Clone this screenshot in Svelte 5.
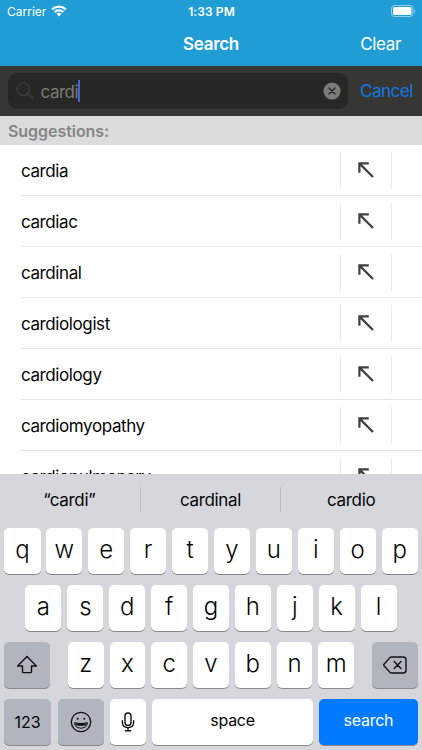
<script lang="ts">
  let query = 'cardi';

  const suggestions: string[] = [
    'cardia',
    'cardiac',
    'cardinal',
    'cardiologist',
    'cardiology',
    'cardiomyopathy',
    'cardiopulmonary'
  ];

  const predictions = ['“cardi”', 'cardinal', 'cardio'];
  const topRow = 'qwertyuiop'.split('');
  const middleRow = 'asdfghjkl'.split('');
  const bottomRow = 'zxcvbnm'.split('');

  const type = (letter: string) => {
    query = query + letter;
  };

  const erase = () => {
    query = query.slice(0, -1);
  };
</script>

<div class="screen">
  <header>
    <div class="status">
      <div class="carrier">
        <span>Carrier</span>
        <svg width="16" height="12" viewBox="0 0 16 12" fill="none" stroke="#fff" stroke-width="2.3">
          <path d="M1.2 4.4a9.8 9.8 0 0 1 13.6 0" />
          <path d="M3.7 7.1a6.2 6.2 0 0 1 8.6 0" />
          <path d="M8 11.4L5.6 8.9a3.5 3.5 0 0 1 4.8 0z" fill="#fff" stroke="none" />
        </svg>
      </div>
      <span class="time">1:33 PM</span>
      <svg class="battery" width="25" height="12" viewBox="0 0 25 12">
        <rect x="0.5" y="0.5" width="21.5" height="11" rx="3" fill="none" stroke="#fff" stroke-opacity="0.5" />
        <rect x="2" y="2" width="18.5" height="8" rx="1.6" fill="#fff" />
        <path d="M23.3 4v4c1.4-.5 1.4-3.5 0-4z" fill="#fff" fill-opacity="0.55" />
      </svg>
    </div>
    <div class="nav">
      <span></span>
      <h1>Search</h1>
      <button class="clear" on:click={() => (query = '')}>Clear</button>
    </div>
  </header>

  <div class="search-bar">
    <div class="field">
      <svg width="18" height="18" viewBox="0 0 18 18" fill="none" stroke="#3a3a38" stroke-width="1.6" stroke-linecap="round">
        <circle cx="7.2" cy="7.2" r="6.2" />
        <path d="M11.8 11.8l4.8 4.4" />
      </svg>
      <span class="query">{query}</span>
      <span class="caret"></span>
      <svg class="reset" width="18" height="18" viewBox="0 0 18 18">
        <circle cx="9" cy="9" r="8.6" fill="#7d7d7b" />
        <path d="M6 6l6 6M12 6l-6 6" stroke="#272723" stroke-width="1.5" stroke-linecap="round" />
      </svg>
    </div>
    <button class="cancel">Cancel</button>
  </div>

  <h2>Suggestions:</h2>

  <ul>
    {#each suggestions as suggestion}
      <li>
        <span class="word">{suggestion}</span>
        <button class="fill" aria-label="Use suggestion" on:click={() => (query = suggestion)}>
          <svg width="16" height="16" viewBox="0 0 16 16" fill="none" stroke="#3f3f3f" stroke-width="2.2">
            <path d="M10.8 1.4H1.4v9.4M1.6 1.6l13.4 13.4" />
          </svg>
        </button>
      </li>
    {/each}
  </ul>

  <div class="keyboard">
    <div class="predictions">
      {#each predictions as prediction}
        <span>{prediction}</span>
      {/each}
    </div>

    <div class="row">
      {#each topRow as letter}
        <button class="key" on:click={() => type(letter)}>{letter}</button>
      {/each}
    </div>

    <div class="row middle">
      {#each middleRow as letter}
        <button class="key" on:click={() => type(letter)}>{letter}</button>
      {/each}
    </div>

    <div class="row bottom">
      <button class="key dark shift" aria-label="Shift">
        <svg width="22" height="20" viewBox="0 0 22 20" fill="none" stroke="#111" stroke-width="1.4" stroke-linejoin="round">
          <path d="M11 1.5L1.6 11h4.9v5.4q0 1.2 1.2 1.2h6.6q1.2 0 1.2-1.2V11h4.9z" />
        </svg>
      </button>
      <div class="letters">
        {#each bottomRow as letter}
          <button class="key" on:click={() => type(letter)}>{letter}</button>
        {/each}
      </div>
      <button class="key dark shift" aria-label="Delete" on:click={erase}>
        <svg width="24" height="18" viewBox="0 0 24 18" fill="none" stroke="#111" stroke-width="1.4" stroke-linejoin="round" stroke-linecap="round">
          <path d="M8.4 1h11.8q2.8 0 2.8 2.8v10.4q0 2.8-2.8 2.8H8.4q-.8 0-1.4-.6L1.2 10q-.9-1 0-2L7 1.6Q7.6 1 8.4 1z" />
          <path d="M11.2 5.5l6.8 7M18 5.5l-6.8 7" />
        </svg>
      </button>
    </div>

    <div class="row">
      <button class="key dark mode">123</button>
      <button class="key dark mode emoji" aria-label="Emoji">
        <svg width="22" height="22" viewBox="0 0 22 22" fill="none" stroke="#111" stroke-width="1.3">
          <circle cx="11" cy="11" r="9.7" />
          <circle cx="7.7" cy="7.8" r="1" fill="#111" stroke="none" />
          <circle cx="14.3" cy="7.8" r="1" fill="#111" stroke="none" />
          <path d="M4.6 11.8q6.4 1.6 12.8 0c-.4 7.2-12.4 7.2-12.8 0z" stroke-linejoin="round" stroke-width="1.1" />
          <path d="M5.2 12.2q5.8 1.4 11.6 0l-1 2.1q-4.8 1-9.6 0z" fill="#111" stroke="none" />
        </svg>
      </button>
      <button class="key mic" aria-label="Dictate">
        <svg width="14" height="20" viewBox="0 0 14 20" fill="none" stroke="#111" stroke-width="1.4" stroke-linecap="round">
          <rect x="4" y="1" width="6" height="12.4" rx="3" />
          <path d="M1.4 8.8v1.8q0 5 5.6 5t5.6-5V8.8M7 15.8v2.8M4.4 18.8h5.2" />
        </svg>
      </button>
      <button class="key space">space</button>
      <button class="key go">search</button>
    </div>
  </div>
</div>

<style>
  :global(body) {
    overflow: hidden;
  }

  .screen {
    width: 422px;
    height: 750px;
    display: flex;
    flex-direction: column;
    background: #fff;
    color: #050505;
    overflow: hidden;
    font-family: Inter, Roboto, sans-serif;
    font-size: 17px;
  }

  button {
    border: none;
    background: none;
    padding: 0;
    font: inherit;
    color: inherit;
  }

  svg {
    display: block;
    flex-shrink: 0;
  }

  header {
    height: 66px;
    flex-shrink: 0;
    background: #219dd5;
    color: #fff;
  }

  .status {
    display: grid;
    grid-template-columns: 1fr auto 1fr;
    align-items: center;
    height: 22px;
    padding: 0 6px 0 7px;
    font-size: 12px;
  }

  .carrier {
    display: flex;
    align-items: center;
    gap: 5px;
    letter-spacing: 0;
  }

  .time {
    font-weight: 600;
    letter-spacing: 0.1px;
  }

  .battery {
    justify-self: end;
  }

  .nav {
    display: grid;
    grid-template-columns: 1fr auto 1fr;
    align-items: center;
    height: 43px;
    padding: 0 21px;
  }

  h1 {
    margin: 0;
    font-size: 17px;
    font-weight: 600;
    letter-spacing: -0.3px;
  }

  .clear {
    justify-self: end;
    letter-spacing: -0.35px;
  }

  .search-bar {
    display: flex;
    align-items: center;
    gap: 12px;
    height: 50px;
    flex-shrink: 0;
    padding: 0 9px 0 8px;
    background: #363632;
  }

  .field {
    flex: 1;
    display: flex;
    align-items: center;
    height: 36px;
    padding: 0 7px 0 8px;
    border-radius: 9px;
    background: #272723;
    color: #7b7b79;
  }

  .query {
    margin-left: 6.5px;
    padding-top: 1px;
    letter-spacing: -0.5px;
  }

  .caret {
    width: 2px;
    height: 22px;
    background: #3f63e8;
  }

  .reset {
    margin-left: auto;
  }

  .cancel {
    color: #1479e4;
    letter-spacing: -0.45px;
  }

  h2 {
    margin: 0;
    height: 29px;
    flex-shrink: 0;
    padding-left: 8px;
    background: #dcdcdc;
    color: #858585;
    font-size: 16px;
    line-height: 30px;
    font-weight: 600;
    letter-spacing: -0.05px;
  }

  ul {
    flex: 1;
    min-height: 0;
    margin: 0;
    padding: 0 0 0 21px;
    overflow: hidden;
    list-style: none;
  }

  li {
    display: flex;
    align-items: center;
    height: 51px;
    padding-right: 30px;
    box-sizing: border-box;
    border-bottom: 1px solid #e6e6e6;
  }

  .word {
    flex: 1;
    padding-top: 2px;
    letter-spacing: -0.4px;
  }

  .fill {
    display: flex;
    align-items: center;
    justify-content: center;
    width: 52px;
    height: 37px;
    box-sizing: border-box;
    border-left: 1px solid #ebebeb;
    border-right: 1px solid #ebebeb;
  }

  .keyboard {
    height: 276px;
    flex-shrink: 0;
    display: flex;
    flex-direction: column;
    gap: 11px;
    box-sizing: border-box;
    padding: 0 4.4px;
    background: #d6d7dd;
  }

  .predictions {
    display: grid;
    grid-template-columns: repeat(3, 1fr);
    align-items: center;
    height: 43px;
    margin: 0 -3.4px 0 -5.4px;
  }

  .predictions span {
    height: 25px;
    margin-top: 8px;
    line-height: 27px;
    text-align: center;
    letter-spacing: -0.35px;
  }

  .predictions span + span {
    border-left: 1px solid #bcbdc3;
  }

  .row {
    display: flex;
    gap: 5.8px;
    height: 46px;
  }

  .middle {
    padding: 0 21px;
  }

  .bottom {
    justify-content: space-between;
  }

  .letters {
    display: flex;
    gap: 5.8px;
    width: 286.5px;
  }

  .key {
    flex: 1 1 0;
    min-width: 0;
    display: flex;
    align-items: center;
    justify-content: center;
    padding-bottom: 4px;
    border-radius: 5px;
    background: #fff;
    box-shadow: 0 1px 0 #898a8d;
    font-size: 24px;
    font-weight: 300;
  }

  .dark {
    background: #b0b5c0;
    padding-bottom: 0;
  }

  .shift {
    flex: none;
    width: 45.5px;
  }

  .mode {
    flex: none;
    width: 46.5px;
    font-size: 16px;
    font-weight: 400;
  }

  .emoji {
    margin-left: 1px;
  }

  .mic {
    flex: none;
    width: 36px;
    padding-bottom: 0;
  }

  .space {
    font-size: 16px;
    font-weight: 400;
    letter-spacing: -0.25px;
  }

  .go {
    flex: none;
    width: 98.5px;
    background: #007aff;
    color: #fff;
    font-size: 16px;
    font-weight: 400;
    letter-spacing: -0.25px;
  }
</style>
